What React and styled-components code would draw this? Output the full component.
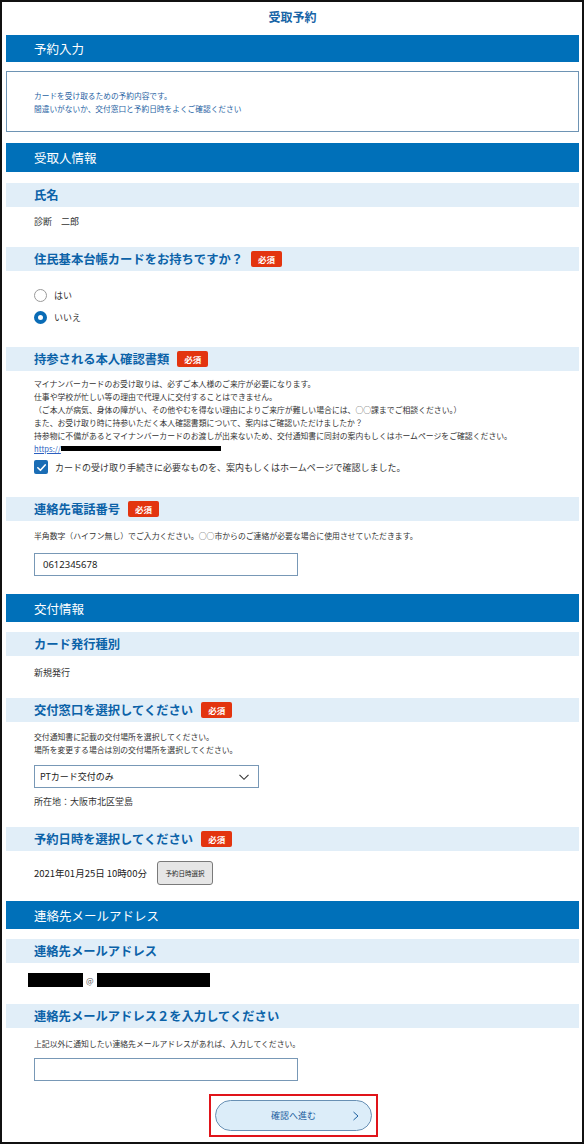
import React from "react";
import styled, { createGlobalStyle } from "styled-components";

const GlobalStyle = createGlobalStyle`
  html, body { margin: 0; padding: 0; background: #fff; }
  body {
    font-family: "Noto Sans CJK JP", "Noto Sans", sans-serif;
    color: #333;
    -webkit-font-smoothing: antialiased;
  }
`;

const Frame = styled.div`
  width: 584px;
  height: 1144px;
  box-sizing: border-box;
  border: 2px solid #111;
  padding: 0 3px 0 4px;
  background: #fff;
  overflow: hidden;
`;

const PageTitle = styled.h1`
  margin: 0;
  height: 33px;
  box-sizing: border-box;
  padding-bottom: 4px;
  display: flex;
  align-items: center;
  justify-content: center;
  font-size: 12px;
  font-weight: 700;
  color: #1664a6;
`;

const SectionBar = styled.h2`
  margin: ${(p) => p.$mt || 0}px 0 0;
  height: ${(p) => p.$h || 28}px;
  display: flex;
  align-items: center;
  padding-left: 28px;
  background: #0070b9;
  color: #fff;
  font-size: 12.5px;
  font-weight: 400;
`;

const InfoBox = styled.div`
  margin-top: 9px;
  height: 61px;
  box-sizing: border-box;
  border: 1px solid #6e94b4;
  padding: 18px 0 0 27px;
  font-size: 7.7px;
  line-height: 12.5px;
  color: #1f63a3;
`;

const FieldHeader = styled.h3`
  margin: ${(p) => p.$mt || 0}px 0 0;
  height: 24px;
  display: flex;
  align-items: center;
  gap: 8px;
  padding-left: 28px;
  background: #e1eef8;
  color: #0b62a8;
  font-size: 12.3px;
  font-weight: 700;
`;

const Required = styled.span`
  display: inline-flex;
  align-items: center;
  justify-content: center;
  height: 16px;
  padding: 0 7px;
  border-radius: 2px;
  background: #e3340f;
  color: #fff;
  font-size: 8.5px;
  font-weight: 700;
`;

const Value = styled.p`
  margin: ${(p) => p.$mt || 0}px 0 0 28px;
  font-size: ${(p) => p.$size || 9}px;
  line-height: 14px;
  color: #333;
`;

const Note = styled.p`
  margin: ${(p) => p.$mt || 0}px 0 0 28px;
  font-size: 7.85px;
  line-height: 12.9px;
  color: #333;
`;

const RadioGroup = styled.div`
  margin: 17px 0 0 28px;
  display: flex;
  flex-direction: column;
  gap: 8px;
`;

const RadioRow = styled.label`
  display: flex;
  align-items: center;
  gap: 7px;
  height: 14px;
  font-size: 9px;
  color: #333;
`;

const RadioDot = styled.span`
  width: 13px;
  height: 13px;
  box-sizing: border-box;
  border-radius: 50%;
  background: #fff;
  border: ${(p) => (p.$checked ? "4px solid #0a6cb6" : "1px solid #9a9a9a")};
`;

const LinkLine = styled.div`
  display: flex;
  align-items: center;
  height: 12.9px;
`;

const Link = styled.a`
  color: #2b5fc0;
  text-decoration: underline;
  font-size: 7.7px;
`;

const Redaction = styled.span`
  display: inline-block;
  width: ${(p) => p.$w}px;
  height: ${(p) => p.$h}px;
  background: #000;
`;

const CheckRow = styled.label`
  margin: 5px 0 0 28px;
  display: flex;
  align-items: center;
  gap: 7px;
  height: 14px;
  font-size: 9px;
  color: #333;
`;

const CheckBox = styled.span`
  width: 14px;
  height: 14px;
  border-radius: 2px;
  background: #1b6db5;
  display: flex;
  align-items: center;
  justify-content: center;
`;

const TextInput = styled.div`
  margin: ${(p) => p.$mt || 0}px 0 0 28px;
  width: 264px;
  height: 23px;
  box-sizing: border-box;
  border: 1px solid #7898b6;
  padding-left: 8px;
  display: flex;
  align-items: center;
  font-family: "Noto Sans", "Noto Sans CJK JP", sans-serif;
  font-size: 9.5px;
  color: #222;
`;

const Select = styled.div`
  margin: 8px 0 0 28px;
  width: 225px;
  height: 23px;
  box-sizing: border-box;
  border: 1px solid #7898b6;
  padding: 0 8px 0 5px;
  display: flex;
  align-items: center;
  justify-content: space-between;
  font-size: 9px;
  color: #222;
`;

const DateRow = styled.div`
  margin: 10px 0 0 28px;
  display: flex;
  align-items: center;
  gap: 10px;
  font-size: 9.5px;
  color: #222;
`;

const SmallButton = styled.button`
  width: 56px;
  height: 24px;
  padding: 0;
  border: 1px solid #7a7a7a;
  border-radius: 3px;
  background: #e6e6e6;
  font-family: inherit;
  font-size: 6.5px;
  color: #222;
  white-space: nowrap;
`;

const EmailRow = styled.div`
  margin: 10px 0 0 22px;
  display: flex;
  align-items: center;
  gap: 3px;
  font-size: 8px;
  color: #555;
`;

const SubmitArea = styled.div`
  margin-top: 13px;
  display: flex;
  justify-content: center;
  padding-left: 2px;
`;

const Highlight = styled.div`
  width: 169px;
  height: 43px;
  box-sizing: border-box;
  border: 2px solid #e0141a;
  display: flex;
  align-items: center;
  justify-content: center;
`;

const SubmitButton = styled.button`
  position: relative;
  width: 157px;
  height: 31px;
  border: 1px solid #6890b4;
  border-radius: 16px;
  background: #dcedf9;
  font-family: inherit;
  font-size: 9px;
  color: #1d5f9e;
  padding: 0;
`;

const ChevronMark = styled.svg`
  position: absolute;
  right: 11px;
  top: 50%;
  transform: translateY(-50%);
`;

const Check = () => (
  <svg width="11" height="11" viewBox="0 0 12 12" fill="none">
    <path d="M2 6.3 L4.8 9 L10 3.2" stroke="#fff" strokeWidth="1.8" strokeLinecap="round" strokeLinejoin="round" />
  </svg>
);

const ChevronDown = () => (
  <svg width="12" height="12" viewBox="0 0 12 12" fill="none">
    <path d="M1.5 3.8 L6 8.3 L10.5 3.8" stroke="#333" strokeWidth="1.1" />
  </svg>
);

export default function App() {
  return (
    <>
      <GlobalStyle />
      <Frame>
        <PageTitle>受取予約</PageTitle>

        <SectionBar $h={27}>予約入力</SectionBar>
        <InfoBox>
          カードを受け取るための予約内容です。
          <br />
          間違いがないか、交付窓口と予約日時をよくご確認ください
        </InfoBox>

        <SectionBar $mt={11} $h={29}>受取人情報</SectionBar>

        <FieldHeader $mt={11}>氏名</FieldHeader>
        <Value $mt={8}>診断　二郎</Value>

        <FieldHeader $mt={18}>
          住民基本台帳カードをお持ちですか？<Required>必須</Required>
        </FieldHeader>
        <RadioGroup>
          <RadioRow>
            <RadioDot />
            はい
          </RadioRow>
          <RadioRow>
            <RadioDot $checked />
            いいえ
          </RadioRow>
        </RadioGroup>

        <FieldHeader $mt={23}>
          持参される本人確認書類<Required>必須</Required>
        </FieldHeader>
        <Note $mt={7}>
          マイナンバーカードのお受け取りは、必ずご本人様のご来庁が必要になります。
          <br />
          仕事や学校が忙しい等の理由で代理人に交付することはできません。
          <br />
          （ご本人が病気、身体の障がい、その他やむを得ない理由によりご来庁が難しい場合には、○○課までご相談ください。）
          <br />
          また、お受け取り時に持参いただく本人確認書類について、案内はご確認いただけましたか？
          <br />
          持参物に不備があるとマイナンバーカードのお渡しが出来ないため、交付通知書に同封の案内もしくはホームページをご確認ください。
        </Note>
        <Note>
          <LinkLine>
            <Link href="#">https://</Link>
            <Redaction $w={160} $h={5} />
          </LinkLine>
        </Note>
        <CheckRow>
          <CheckBox>
            <Check />
          </CheckBox>
          カードの受け取り手続きに必要なものを、案内もしくはホームページで確認しました。
        </CheckRow>

        <FieldHeader $mt={23}>
          連絡先電話番号<Required>必須</Required>
        </FieldHeader>
        <Note $mt={9}>
          半角数字（ハイフン無し）でご入力ください。○○市からのご連絡が必要な場合に使用させていただきます。
        </Note>
        <TextInput $mt={10}>0612345678</TextInput>

        <SectionBar $mt={18}>交付情報</SectionBar>

        <FieldHeader $mt={10}>カード発行種別</FieldHeader>
        <Value $mt={10}>新規発行</Value>

        <FieldHeader $mt={18}>
          交付窓口を選択してください<Required>必須</Required>
        </FieldHeader>
        <Note $mt={9}>
          交付通知書に記載の交付場所を選択してください。
          <br />
          場所を変更する場合は別の交付場所を選択してください。
        </Note>
        <Select>
          PTカード交付のみ
          <ChevronDown />
        </Select>
        <Value $mt={7}>所在地：大阪市北区堂島</Value>

        <FieldHeader $mt={18}>
          予約日時を選択してください<Required>必須</Required>
        </FieldHeader>
        <DateRow>
          2021年01月25日 10時00分
          <SmallButton type="button">予約日時選択</SmallButton>
        </DateRow>

        <SectionBar $mt={16}>連絡先メールアドレス</SectionBar>

        <FieldHeader $mt={10}>連絡先メールアドレス</FieldHeader>
        <EmailRow>
          <Redaction $w={55} $h={14} />
          @
          <Redaction $w={113} $h={14} />
        </EmailRow>

        <FieldHeader $mt={17}>連絡先メールアドレス２を入力してください</FieldHeader>
        <Note $mt={10}>上記以外に通知したい連絡先メールアドレスがあれば、入力してください。</Note>
        <TextInput $mt={7} />

        <SubmitArea>
          <Highlight>
            <SubmitButton type="button">
              確認へ進む
              <ChevronMark width="8" height="11" viewBox="0 0 8 11" fill="none">
                <path d="M1.5 1.5 L6 5.5 L1.5 9.5" stroke="#1d5f9e" strokeWidth="1" />
              </ChevronMark>
            </SubmitButton>
          </Highlight>
        </SubmitArea>
      </Frame>
    </>
  );
}
